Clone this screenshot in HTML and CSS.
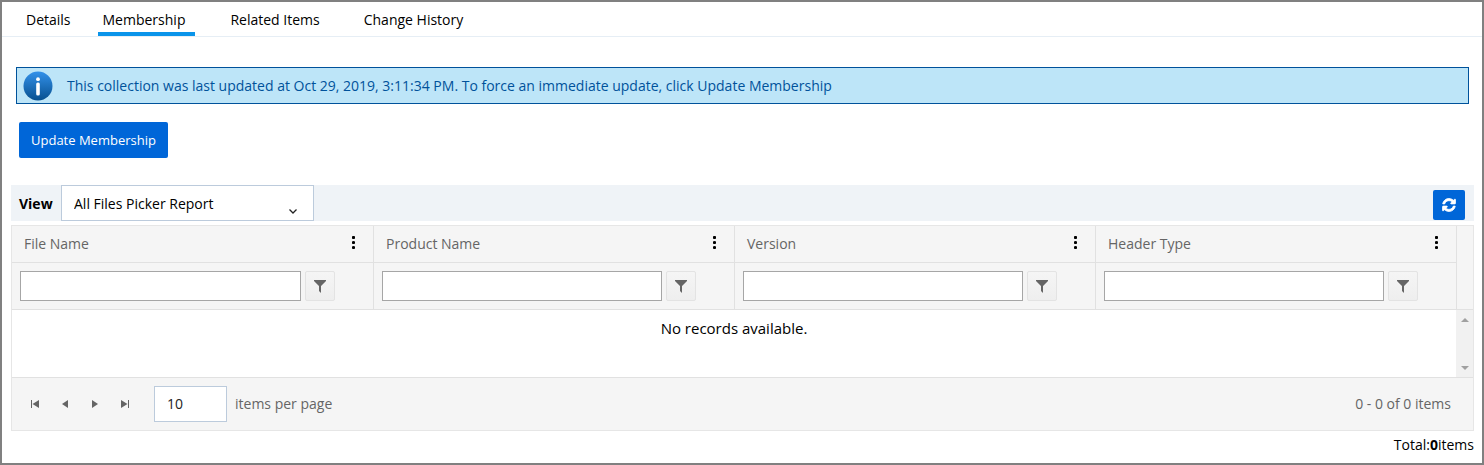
FILE: index.html
```html
<!DOCTYPE html>
<html lang="en">
<head>
<meta charset="utf-8">
<title>Collection Membership</title>
<link rel="stylesheet" href="styles.css">
</head>
<body>
<svg class="sprite" aria-hidden="true">
  <symbol id="kebab" viewBox="0 0 3 13"><circle cx="1.5" cy="1.5" r="1.6"/><circle cx="1.5" cy="6.5" r="1.6"/><circle cx="1.5" cy="11.5" r="1.6"/></symbol>
  <symbol id="funnel" viewBox="0 0 12 13"><path d="M0 0h12v1L7 6v7L5 11V6L0 1z"/></symbol>
</svg>
<nav class="tabs">
  <a class="tab" href="#details">Details</a>
  <a class="tab active" href="#membership" aria-current="page">Membership</a>
  <a class="tab" href="#related">Related Items</a>
  <a class="tab" href="#history">Change History</a>
</nav>
<main class="content">
  <div class="notice">
    <svg class="info" viewBox="0 0 30 30" aria-hidden="true">
      <defs><linearGradient id="ball" x1="0" y1="0" x2="0" y2="1"><stop offset="0" stop-color="#3391ea"/><stop offset="1" stop-color="#08508f"/></linearGradient></defs>
      <circle cx="15" cy="15" r="14.5" fill="url(#ball)"/>
      <circle cx="15" cy="8.2" r="1.9" fill="#fff"/>
      <rect x="13.2" y="11.5" width="3.6" height="13" rx="1.6" fill="#fff"/>
    </svg>
    <span>This collection was last updated at Oct 29, 2019, 3:11:34 PM. To force an immediate update, click Update Membership</span>
  </div>
  <button class="primary update" type="button">Update Membership</button>
  <div class="toolbar">
    <label class="view-label" for="view">View</label>
    <div class="select-wrap">
      <select id="view" class="view-select"><option>All Files Picker Report</option></select>
      <svg class="chevron" viewBox="0 0 8 5" aria-hidden="true"><path d="M.5.5 4 4 7.500.5"/></svg>
    </div>
    <button class="primary refresh" type="button" aria-label="Refresh">
      <svg viewBox="-60 -60 1656 1656" aria-hidden="true"><path d="M1511 928q0 5-1 7-64 268-268 434.500T764 1536q-146 0-282.500-55T238 1324l-129 129q-19 19-45 19t-45-19-19-45V960q0-26 19-45t45-19h448q26 0 45 19t19 45-19 45l-137 137q71 66 161 102t187 36q134 0 250-65t186-179q11-17 53-117 8-23 30-23h192q13 0 22.500 9.500t9.500 22.500zM1536 128v448q0 26-19 45t-45 19h-448q-26 0-45-19t-19-45 19-45l138-138Q969 256 768 256q-134 0-250 65T332 500q-11 17-53 117-8 23-30 23H50q-13 0-22.500-9.500T18 608v-7q65-268 270-434.500T768 0q146 0 284 55.500T1297 212l130-129q19-19 45-19t45 19 19 45z"/></svg>
    </button>
  </div>
  <section class="grid">
    <table class="records">
      <colgroup><col><col><col><col><col class="scroll-col"></colgroup>
      <thead>
        <tr class="titles">
          <th scope="col"><div class="title"><span>File Name</span><button type="button" class="menu" aria-label="File Name menu"><svg><use href="#kebab"/></svg></button></div></th>
          <th scope="col"><div class="title"><span>Product Name</span><button type="button" class="menu" aria-label="Product Name menu"><svg><use href="#kebab"/></svg></button></div></th>
          <th scope="col"><div class="title"><span>Version</span><button type="button" class="menu" aria-label="Version menu"><svg><use href="#kebab"/></svg></button></div></th>
          <th scope="col"><div class="title"><span>Header Type</span><button type="button" class="menu" aria-label="Header Type menu"><svg><use href="#kebab"/></svg></button></div></th>
          <td class="gutter" rowspan="2"></td>
        </tr>
        <tr class="filters">
          <td><div class="filter"><input type="text" aria-label="Filter File Name"><button type="button" aria-label="File Name filter"><svg><use href="#funnel"/></svg></button></div></td>
          <td><div class="filter"><input type="text" aria-label="Filter Product Name"><button type="button" aria-label="Product Name filter"><svg><use href="#funnel"/></svg></button></div></td>
          <td><div class="filter"><input type="text" aria-label="Filter Version"><button type="button" aria-label="Version filter"><svg><use href="#funnel"/></svg></button></div></td>
          <td><div class="filter"><input type="text" aria-label="Filter Header Type"><button type="button" aria-label="Header Type filter"><svg><use href="#funnel"/></svg></button></div></td>
        </tr>
      </thead>
      <tbody>
        <tr>
          <td class="empty" colspan="4">No records available.</td>
          <td class="scroll"><div class="scrollbar">
            <svg viewBox="0 0 8 4" aria-hidden="true"><path d="M0 4 4 0l4 4z"/></svg>
            <svg viewBox="0 0 8 4" aria-hidden="true"><path d="M0 0h8L4 4z"/></svg>
          </div></td>
        </tr>
      </tbody>
    </table>
    <div class="pager">
      <div class="pages">
        <button type="button" aria-label="First page"><svg viewBox="0 0 8 8"><path d="M0 0h1v8H0zM8 0v8L1.500 4z"/></svg></button>
        <button type="button" aria-label="Previous page"><svg viewBox="0 0 8 8"><path d="M7 0v8L1 4z"/></svg></button>
        <button type="button" aria-label="Next page"><svg viewBox="0 0 8 8"><path d="M1 0v8l6-4z"/></svg></button>
        <button type="button" aria-label="Last page"><svg viewBox="0 0 8 8"><path d="M7 0h1v8H7zM0 0v8l6.500-4z"/></svg></button>
      </div>
      <input class="size" id="size" type="text" value="10">
      <label for="size">items per page</label>
      <span class="range">0 - 0 of 0 items</span>
    </div>
  </section>
  <div class="total">Total:<b>0</b>items</div>
</main>
</body>
</html>
```

FILE: styles.css
```css
* { box-sizing: border-box; }

body {
  margin: 0;
  min-height: 100vh;
  border: 2px solid #808080;
  background: #fff;
  color: #000;
  font: 14px/20px "Open Sans", "Noto Sans", sans-serif;
}

button, input, select { font: inherit; margin: 0; }
button { padding: 0; display: flex; align-items: center; justify-content: center; }
svg { display: block; }
.sprite { display: none; }

.tabs {
  display: flex;
  gap: 18px;
  height: 35px;
  padding-left: 19px;
  border-bottom: 1px solid #e6eef5;
}
.tab {
  padding: 8px 9px 0 5px;
  color: #000;
  text-decoration: none;
}
.tab.active { margin-right: 12px; padding-right: 10px; border-bottom: 4px solid #0a94ea; }
.tab:nth-child(3) { margin-right: 12px; }

.content { padding: 30px 8px 0 9px; }

.notice {
  display: flex;
  align-items: center;
  gap: 14px;
  margin: 0 5px;
  padding: 3px 6px 2px;
  border: 1px solid #00529b;
  background: #bde5f8;
  color: #00529b;
}
.info { width: 30px; height: 30px; flex: none; }

.primary {
  border: 0;
  border-radius: 2px;
  background: #0066d8;
  color: #fff;
}
.update { height: 36px; margin: 18px 8px 27px; padding: 0 12px; font-size: 13px; font-weight: 500; }
.refresh { width: 32px; height: 30px; margin: 4px 9px 0 auto; }
.refresh svg { width: 14px; height: 14px; fill: #fff; stroke: #fff; stroke-width: 90; }

.toolbar {
  display: flex;
  align-items: center;
  margin-bottom: 4px;
  padding-left: 8px;
  background: #eff3f7;
}
.view-label { width: 42px; padding-top: 2px; font-weight: 700; }
.select-wrap { position: relative; width: 253px; }
.view-select {
  appearance: none;
  display: block;
  width: 100%;
  height: 36px;
  padding: 2px 12px 0;
  border: 1px solid #bccbdc;
  border-radius: 0;
  background: #fff;
  color: #000;
}
.chevron {
  position: absolute;
  right: 17px;
  bottom: 7px;
  width: 8px;
  height: 5px;
  fill: none;
  stroke: #222;
  stroke-width: 1.3;
}

.grid { border: 1px solid #e6e6e6; color: #656565; }
.records {
  width: 100%;
  table-layout: fixed;
  border-spacing: 0;
}
.records th, .records td { padding: 0; font-weight: 400; text-align: left; }
.scroll-col { width: 17px; }
thead { background: #f5f5f5; }
thead th, thead td { border-bottom: 1px solid #e1e1e1; }
thead th + th, .filters td + td, .gutter { border-left: 1px solid #e1e1e1; }
.title {
  display: flex;
  align-items: center;
  justify-content: space-between;
  height: 36px;
  padding: 0 10px 0 12px;
}
.menu {
  width: 19px;
  height: 34px;
  padding-bottom: 3px;
  border: 0;
  background: none;
}
.menu svg { width: 3px; height: 13px; fill: #000; }
.filter { display: flex; gap: 4px; padding: 8px 38px 8px 8px; }
.filter input {
  flex: 1;
  min-width: 0;
  height: 30px;
  padding: 0 8px;
  border: 1px solid #a6a6a6;
  background: #fff;
}
.filter button {
  width: 30px;
  height: 30px;
  border: 1px solid #e3e3e3;
  border-radius: 2px;
  background: linear-gradient(#f5f5f5, #eee);
}
.filter svg { width: 12px; height: 13px; fill: #656565; }

.records .empty {
  height: 67px;
  padding-top: 8px;
  vertical-align: top;
  text-align: center;
  color: #000;
  font-size: 15px;
}
.scroll { background: #f1f1f1; }
.scrollbar {
  display: flex;
  flex-direction: column;
  justify-content: space-between;
  align-items: center;
  height: 67px;
  padding: 8px 0 7px;
}
.scrollbar svg { width: 8px; height: 4px; fill: #a0a0a0; }

.pager {
  display: flex;
  align-items: center;
  gap: 8px;
  padding: 8px 22px 8px 8px;
  border-top: 1px solid #e1e1e1;
  background: #f5f5f5;
}
.pages { display: flex; margin-right: 6px; }
.pages button { width: 30px; height: 30px; border: 0; background: none; }
.pages svg { width: 8px; height: 8px; fill: #656565; }
.size {
  width: 73px;
  height: 36px;
  padding: 0 12px 2px;
  border: 1px solid #bccbdc;
  background: #fff;
  color: #222;
}
.range { margin-left: auto; }
.total { padding-top: 4px; text-align: right; }
```
